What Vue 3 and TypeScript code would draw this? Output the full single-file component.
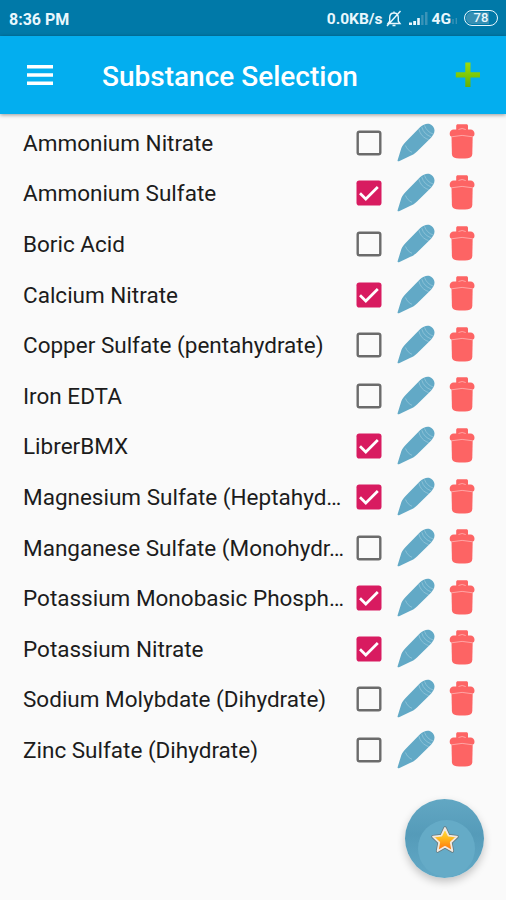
<script setup lang="ts">
import { ref } from 'vue'

interface Substance {
  name: string
  selected: boolean
}

const substances = ref<Substance[]>([
  { name: 'Ammonium Nitrate', selected: false },
  { name: 'Ammonium Sulfate', selected: true },
  { name: 'Boric Acid', selected: false },
  { name: 'Calcium Nitrate', selected: true },
  { name: 'Copper Sulfate (pentahydrate)', selected: false },
  { name: 'Iron EDTA', selected: false },
  { name: 'LibrerBMX', selected: true },
  { name: 'Magnesium Sulfate (Heptahyd…', selected: true },
  { name: 'Manganese Sulfate (Monohydr…', selected: false },
  { name: 'Potassium Monobasic Phosph…', selected: true },
  { name: 'Potassium Nitrate', selected: true },
  { name: 'Sodium Molybdate (Dihydrate)', selected: false },
  { name: 'Zinc Sulfate (Dihydrate)', selected: false },
])
</script>

<template>
  <div class="screen">
    <div class="status">
      <span class="time">8:36 PM</span>
      <span class="speed">0.0KB/s</span>
      <svg class="bell" width="16" height="18" viewBox="0 0 16 18">
        <path d="M2 13.5h12l-1.700-2.300V7.500C12.300 4.800 10.700 3 8 3S3.700 4.800 3.700 7.500v3.700zM6.500 15.500h3M8 1.500V3M1 16L14.500 1" />
      </svg>
      <svg class="signal" width="21" height="15" viewBox="0 0 21 15">
        <path d="M1 14v-2.500h3V14zM5.200 14v-4h2.800v4zM9.200 14V7h2.600v7z" fill="#e9f7fd" />
        <path d="M13.200 14V4h2.300v10zM17 14V1h2.500v13z" fill="#3b94b8" />
      </svg>
      <span class="network">4G</span>
      <svg class="minor" width="6" height="8" viewBox="0 0 6 8">
        <path d="M1 2v5M4.300 1v6" />
      </svg>
      <span class="battery"><span class="level">78</span></span>
    </div>

    <header class="bar">
      <svg class="menu" width="26" height="20" viewBox="0 0 26 20">
        <path d="M0 0h26v3.500H0zM0 8.200h26v3.500H0zM0 16.400h26v3.500H0z" fill="#fff" />
      </svg>
      <h1>Substance Selection</h1>
      <svg class="add" width="26" height="26" viewBox="0 0 26 26">
        <defs>
          <linearGradient id="plus" x1="0" y1="0" x2="0" y2="1">
            <stop offset="0" stop-color="#9ddb0a" />
            <stop offset=".45" stop-color="#83cc08" />
            <stop offset="1" stop-color="#64ae05" />
          </linearGradient>
        </defs>
        <path d="M10.300 .5h5.200v9.700H25v5.200h-9.500V25h-5.200v-9.600H.8v-5.200h9.500z" fill="url(#plus)" />
      </svg>
    </header>

    <main class="list">
      <div v-for="item in substances" :key="item.name" class="row">
        <span class="name">{{ item.name }}</span>
        <svg class="check" width="26" height="26" viewBox="0 0 26 26" @click="item.selected = !item.selected">
          <template v-if="item.selected">
            <rect x=".5" y=".5" width="25" height="25" rx="2.800" fill="#d81b60" />
            <path d="M4 13.200l5.800 5.800L21.800 7" fill="none" stroke="#fff" stroke-width="2.700" />
          </template>
          <rect v-else x="1.700" y="1.700" width="22.600" height="22.600" rx="1.800" fill="none" stroke="#6b6b6b" stroke-width="2.400" />
        </svg>
        <svg class="pencil" width="40" height="40" viewBox="0 0 40 40">
          <path d="M1.600 37.300L5.300 25.200C5.800 23.500 8.500 20 11.500 17L24 4.200C27 1.300 30.500 .2 33 .8 36 1.600 38.500 4.500 38.500 7.500 38.500 10 37 12.500 34.500 15.200L21 28.500C18.500 30.800 16.500 32 15 32.600L3 38.200C2 38.600 1.400 38.200 1.600 37.300z" fill="#62a9c6" />
          <path d="M9.500 22.500C11 26 13 28 16 29.300M23 6.200C24 11 27.500 15 32.500 16.500M25.800 4.200C27 8.800 30.700 12.500 35.200 13.800M28.500 2.500C30 6.500 33 9.800 37.200 11" fill="none" stroke="#8fc3d8" stroke-width=".9" />
        </svg>
        <svg class="trash" width="26" height="36" viewBox="0 0 26 36">
          <path d="M2.500 12h21.200L23.300 30C23.200 32.800 21.500 33.800 18.800 34.200Q13.100 35 7.400 34.200C4.700 33.800 3 32.800 2.900 30z" fill="#fd6464" />
          <path d="M7.200 5.500V2C7.200 .8 7.800 .3 9 .3h8.200c1.200 0 1.800.5 1.800 1.700v3.500h2.500c2.300 0 4 1.700 4 4.300 0 1.600-.6 2.500-1.800 2.800Q13.100 14 2.500 12.600C1.300 12.300.7 11.400.7 9.800c0-2.600 1.700-4.300 4-4.300z" fill="#fd6464" />
          <path d="M2.500 12.800Q13.100 10 23.700 12.800M9.500 5.500q3.600-2 7.200 0" fill="none" stroke="#ffabab" stroke-width=".9" />
        </svg>
      </div>
    </main>

    <button class="fab" aria-label="Favorites">
      <span class="disc">
        <svg width="30" height="30" viewBox="0 0 30 30">
          <defs>
            <linearGradient id="gold" x1="0" y1="0" x2="0" y2="1">
              <stop offset="0" stop-color="#ffe34a" />
              <stop offset=".45" stop-color="#ffb91d" />
              <stop offset="1" stop-color="#ff6d0c" />
            </linearGradient>
          </defs>
          <path d="M15 3L18.600 10.700 27 11.700 20.800 17.500 22.400 26 15 21.800 7.600 26 9.200 17.500 3 11.700 11.400 10.700z" fill="none" stroke="#65777c" stroke-width="3.400" stroke-linejoin="round" />
          <path d="M15 3L18.600 10.700 27 11.700 20.800 17.500 22.400 26 15 21.800 7.600 26 9.200 17.500 3 11.700 11.400 10.700z" fill="url(#gold)" stroke="#f1e9df" stroke-width="1.800" stroke-linejoin="round" />
        </svg>
      </span>
    </button>
  </div>
</template>

<style>
body {
  margin: 0;
  background: #fafafa;
}
</style>

<style scoped>
.screen {
  position: relative;
  width: 506px;
  height: 900px;
  overflow: hidden;
  background: #fafafa;
  font-family: Roboto, sans-serif;
}
.status {
  display: flex;
  align-items: center;
  height: 36px;
  box-sizing: border-box;
  padding: 1px 8px 0 9px;
  background: #0079a8;
  color: #e9f7fd;
  font-size: 16px;
  font-weight: 700;
}
.time,
.speed,
.network {
  padding-top: 1px;
}
.speed {
  margin-left: auto;
  font-size: 15.500px;
}
.bell {
  margin-left: 3px;
  fill: none;
  stroke: #e9f7fd;
  stroke-width: 1.400;
}
.signal {
  margin-left: 6px;
}
.network {
  margin-left: 3px;
  font-size: 15.500px;
}
.minor {
  margin: 5px 6px 0 1px;
  stroke: #3b94b8;
  stroke-width: 1.300;
}
.battery {
  display: flex;
  box-sizing: border-box;
  width: 34px;
  height: 16px;
  margin-top: -1px;
  padding: 1px;
  border: 1.500px solid #e9f7fd;
  border-radius: 8px;
}
.level {
  flex: 1;
  border-radius: 6px;
  background: linear-gradient(90deg, #378fb3 78%, #0079a8 78%);
  font-size: 13px;
  font-weight: 500;
  line-height: 12px;
  text-align: center;
}
.bar {
  display: flex;
  align-items: center;
  height: 78px;
  box-sizing: border-box;
  padding: 0 25px 0 27px;
  background: #03aeef;
  box-shadow: 0 1px 4px rgba(0, 0, 0, 0.4);
}
h1 {
  flex: 1;
  margin: 3px 0 0 49px;
  color: #fff;
  font-size: 28px;
  font-weight: 500;
  line-height: 34px;
  white-space: nowrap;
}
.list {
  display: grid;
  grid-auto-rows: 50.600px;
  padding: 3.600px 31px 0 23px;
}
.row {
  display: flex;
  align-items: center;
}
.name {
  flex: 1;
  min-width: 0;
  color: #1c1c1c;
  font-size: 22.500px;
  line-height: 30px;
  white-space: nowrap;
}
.check {
  margin-right: 14px;
}
.pencil {
  margin-right: 13px;
}
.trash {
  margin-bottom: 1px;
}
.fab {
  position: absolute;
  left: 405px;
  top: 799px;
  display: flex;
  align-items: center;
  justify-content: center;
  width: 79px;
  height: 79px;
  padding: 0;
  border: 0;
  border-radius: 50%;
  background: linear-gradient(#62a7c3, #559bb9 45%, #62a9c6);
  box-shadow: 0 4px 8px rgba(0, 0, 0, 0.22);
}
.disc {
  display: flex;
  align-items: flex-start;
  justify-content: center;
  box-sizing: border-box;
  width: 57px;
  height: 57px;
  margin: 19px 0 0 3px;
  padding: 5px 3px 0 0;
  border-radius: 50%;
  background: #65abc7;
}
</style>
